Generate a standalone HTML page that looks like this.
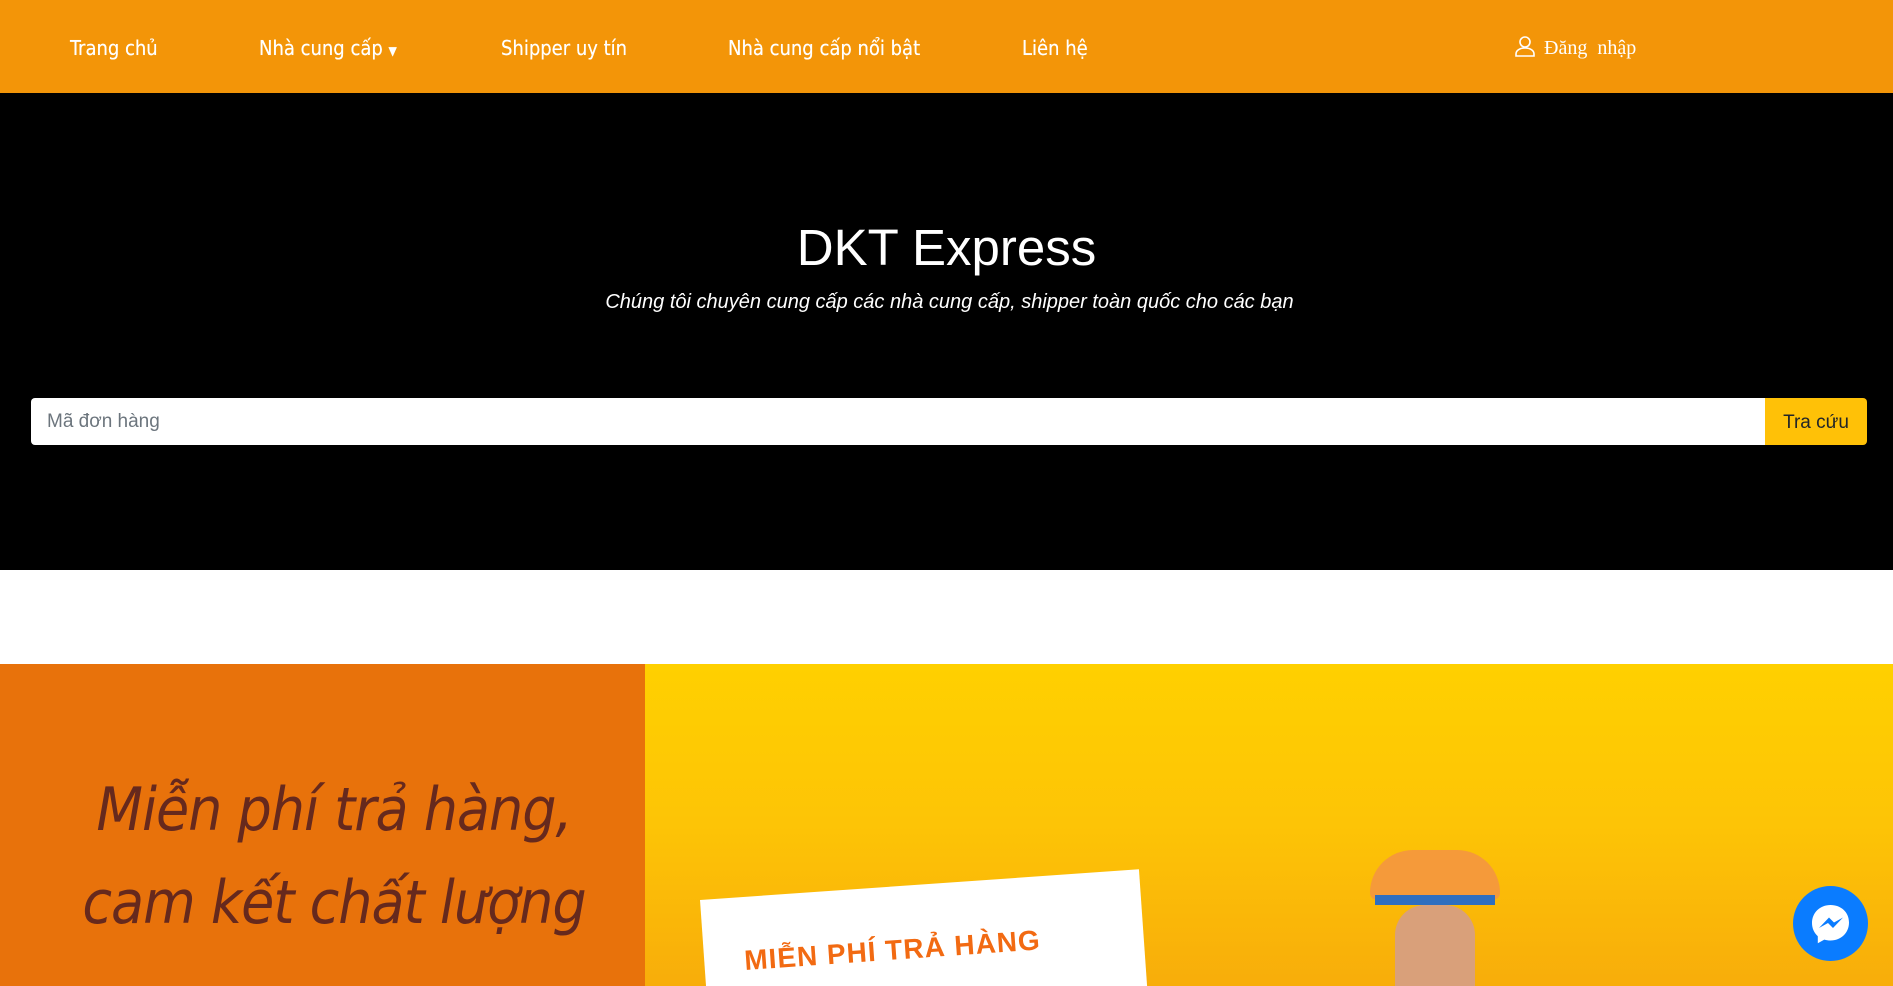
<!DOCTYPE html>
<html><head><meta charset="utf-8"><style>
*{margin:0;padding:0;box-sizing:border-box}
html{width:1893px;height:986px;overflow:hidden}
body{width:1893px;height:986px;overflow:hidden;font-family:"Liberation Sans",sans-serif;background:#fff;position:relative}
.nav{position:absolute;left:0;top:0;width:1893px;height:93px;background:#f39508}
.nav a{position:absolute;top:37px;color:#fff;font-size:20px;line-height:22px;text-decoration:none;font-family:"DejaVu Sans Condensed","Liberation Sans",sans-serif;font-stretch:condensed;text-shadow:0 0 0.4px #fff}
.hero{position:absolute;left:0;top:93px;width:1893px;height:477px;background:#000}
h1{position:absolute;left:0;width:1893px;top:218px;text-align:center;color:#fff;font-weight:400;font-size:51px}
.sub{position:absolute;left:0;width:1899px;top:291px;text-align:center;color:#fff;font-style:italic;font-size:20px}
.inp{position:absolute;left:31px;top:398px;width:1735px;height:47px;background:#fff;border-radius:4px 0 0 4px;color:#6c757d;font-size:19px;padding:13px 16px}
.btn{position:absolute;left:1765px;top:398px;width:102px;height:47px;background:#ffc107;border-radius:0 4px 4px 0;color:#212529;font-size:19px;text-align:center;line-height:49px}
.left{position:absolute;left:0;top:664px;width:645px;height:322px;background:#e8720b;overflow:hidden}
.left p{position:absolute;left:0;width:668px;text-align:center;color:#66291d;font-style:italic;font-size:60px;line-height:72px;font-family:"DejaVu Sans Condensed","Liberation Sans",sans-serif;font-stretch:condensed;letter-spacing:-1px}
.right{position:absolute;left:645px;top:664px;width:1248px;height:322px;background:linear-gradient(180deg,#ffd000 0%,#fdc406 50%,#f8ad0a 100%);overflow:hidden}
.card{position:absolute;left:55px;top:236px;width:440px;height:120px;background:#fff;transform:rotate(-4deg);transform-origin:left top;overflow:hidden}
.card span{position:absolute;left:40px;top:48px;color:#f26a12;font-weight:bold;font-size:28px;line-height:32px;letter-spacing:1px}
.msg{position:absolute;left:1793px;top:886px;width:75px;height:75px;border-radius:50%;background:#0a7cff}
</style></head><body>
<div class="nav">
<a style="left:70px">Trang chủ</a>
<a style="left:259px">Nhà cung cấp <span style="font-size:12px">▼</span></a>
<a style="left:501px">Shipper uy tín</a>
<a style="left:728px">Nhà cung cấp nổi bật</a>
<a style="left:1022px">Liên hệ</a>
<svg style="position:absolute;left:1514px;top:35px" width="22" height="22" viewBox="0 0 22 22" fill="none" stroke="#fff" stroke-width="1.6"><circle cx="11" cy="7" r="5"/><path d="M2 21v-2c0-3 3-6 9-6s9 3 9 6v2z"/></svg>
<a style="left:1544px;font-family:'Liberation Serif',serif;font-stretch:normal;top:37px;text-shadow:none">Đăng&nbsp; nhập</a>
</div>
<div class="hero"></div>
<h1>DKT Express</h1>
<div class="sub">Chúng tôi chuyên cung cấp các nhà cung cấp, shipper toàn quốc cho các bạn</div>
<div class="inp">Mã đơn hàng</div>
<div class="btn">Tra cứu</div>
<div class="left"><p style="top:110px">Miễn phí trả hàng,</p><p style="top:203px">cam kết chất lượng</p></div>
<div class="right">
<div class="card"><span>MIỄN PHÍ TRẢ HÀNG</span></div>
<div style="position:absolute;left:725px;top:186px;width:130px;height:50px;background:#f59a3a;border-radius:60px 60px 10px 10px"></div>
<div style="position:absolute;left:730px;top:231px;width:120px;height:10px;background:#2f6fc0"></div>
<div style="position:absolute;left:750px;top:241px;width:80px;height:81px;background:#d9a07a;border-radius:30px 30px 0 0"></div>
</div>
<div class="msg"><svg width="75" height="75" viewBox="0 0 75 75"><path d="M37.5 19c-10.5 0-18.5 7.7-18.5 18 0 5.4 2.2 10 5.8 13.2v7l6.5-3.6c2 .6 4 .9 6.2.9 10.5 0 18.5-7.7 18.5-18s-8-17.5-18.5-17.5z" fill="#fff"/><path d="M26 42l10-10.5 5 5 9-5-10 10.5-5-5z" fill="#0a7cff"/></svg></div>
</body></html>
